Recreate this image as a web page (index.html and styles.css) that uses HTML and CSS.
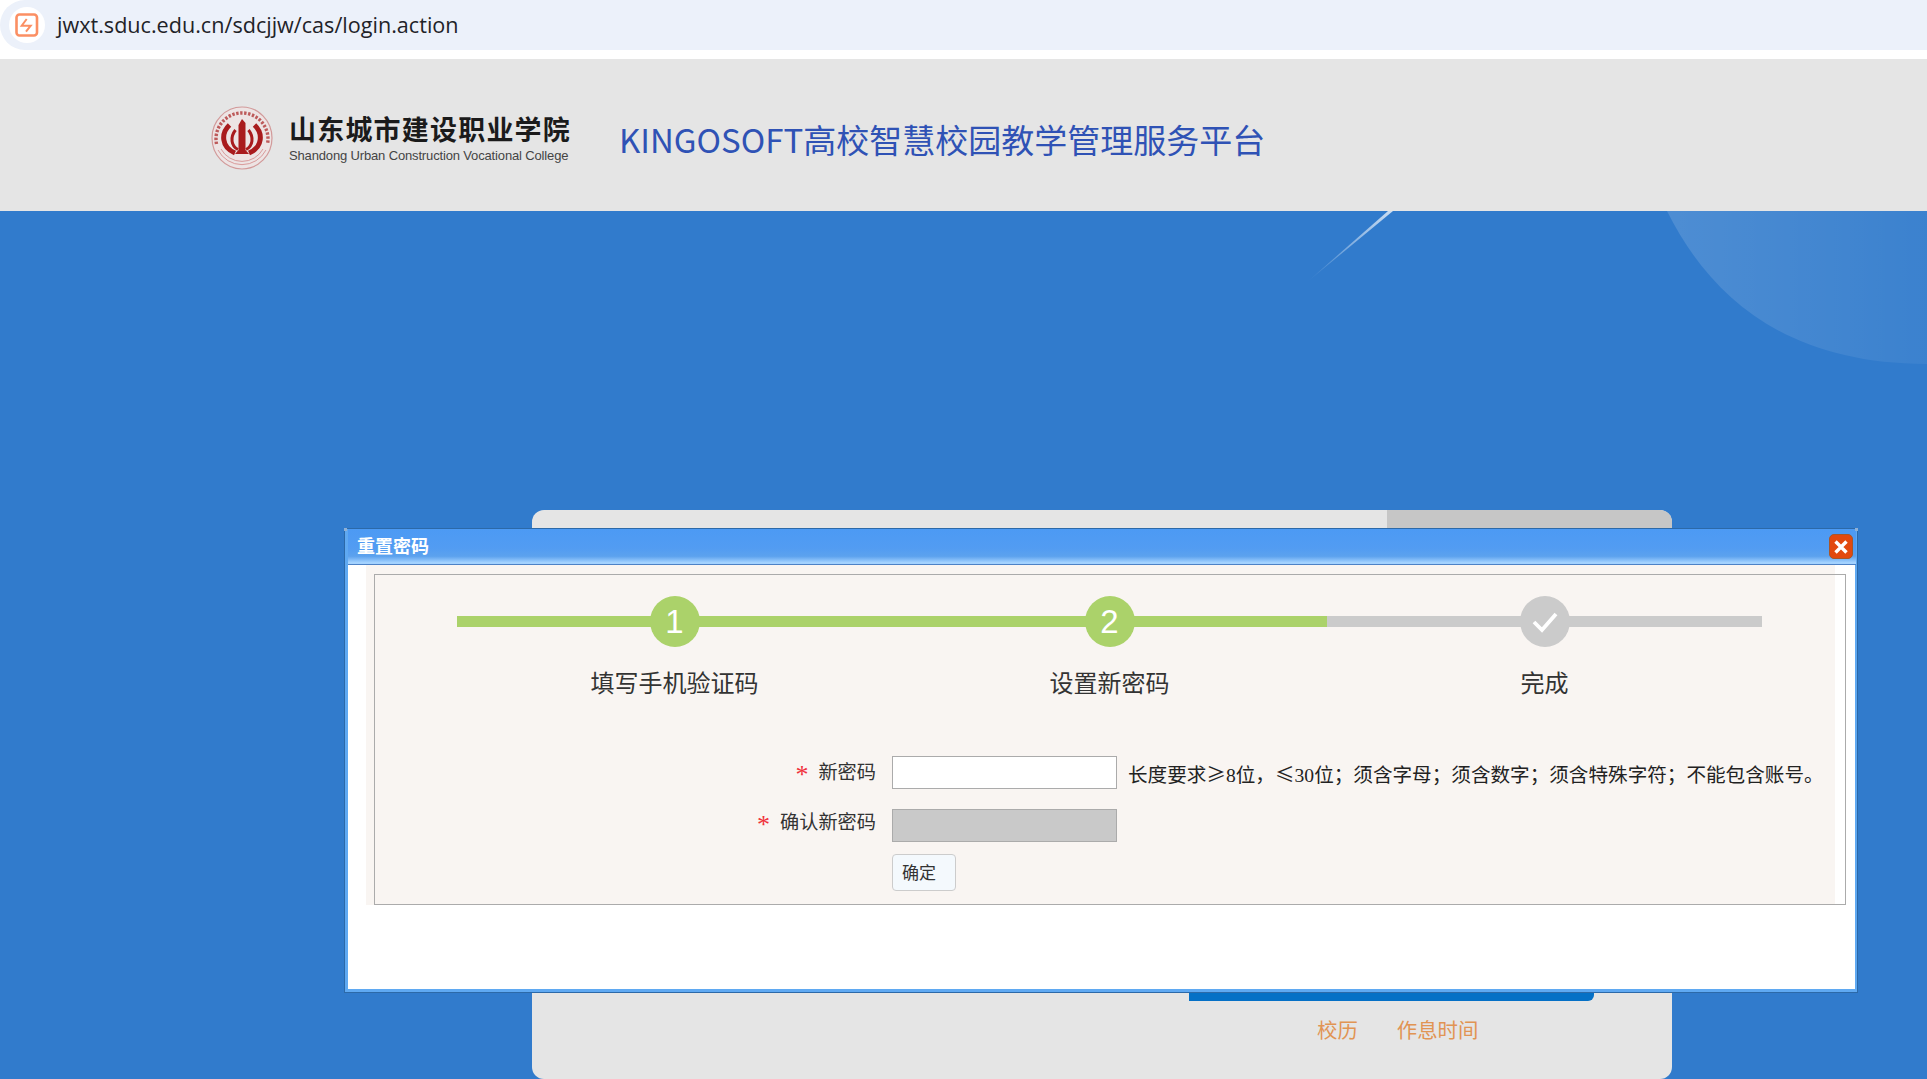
FILE: index.html
```html
<!DOCTYPE html>
<html lang="zh-CN">
<head>
<meta charset="utf-8">
<title>重置密码</title>
<link rel="stylesheet" href="styles.css">
</head>
<body>
<div class="page">
  <div class="urlstrip">
    <div class="urlbar">
      <span class="siteicon">
        <svg width="24" height="24" viewBox="0 0 24 24"><rect x="1.5" y="1.5" width="20.5" height="21" rx="3" fill="#fff" stroke="#FB8F63" stroke-width="2.6"/><path d="M11.7 6 6.7 12.7h9L11 18.7" fill="none" stroke="#FB8F63" stroke-width="2"/></svg>
      </span>
      <span class="urltext">jwxt.sduc.edu.cn/sdcjjw/cas/login.action</span>
    </div>
  </div>
  <header class="brand">
    <svg class="seal" width="62" height="64" viewBox="0 0 62 64">
      <ellipse cx="31" cy="32" rx="30" ry="31" fill="#EDE4E4" stroke="#D29A9A" stroke-width="1.2"/>
      <path d="M5.5 38A26 26 0 1 1 56.5 38" fill="none" stroke="#BD5A5A" stroke-width="3.4" stroke-dasharray="2.4 1.6"/>
      <path d="M7 44A27 27 0 0 0 55 44M10 43A24 24 0 0 0 52 43" fill="none" stroke="#D99A9A" stroke-width="1"/>
      <path d="M18.5 19C10 27 10 41 24 47M43.5 19C52 27 52 41 38 47" fill="none" stroke="#A91B1D" stroke-width="5"/>
      <path d="M24.5 24C19 31 20 40 27 43.5M37.5 24C43 31 42 40 35 43.5" fill="none" stroke="#A91B1D" stroke-width="3"/>
      <path d="M27.5 44V19L31 13l3.5 4V44l3.5 4H24Z" fill="#A91B1D"/>
    </svg>
    <div class="collegename">
      <div class="zh">山东城市建设职业学院</div>
      <div class="en">Shandong Urban Construction Vocational College</div>
    </div>
    <h1 class="platform">KINGOSOFT高校智慧校园教学管理服务平台</h1>
  </header>
  <main class="stage">
    <svg class="decor" width="1927" height="160" viewBox="0 0 1927 160">
      <defs>
        <linearGradient id="arc" x1="0" x2="1" y1="0" y2="0"><stop offset="0" stop-color="#fff" stop-opacity=".14"/><stop offset="1" stop-color="#fff" stop-opacity=".05"/></linearGradient>
        <linearGradient id="streak" x1="1" x2="0" y1="0" y2="1"><stop offset="0" stop-color="#fff" stop-opacity=".75"/><stop offset="1" stop-color="#fff" stop-opacity="0"/></linearGradient>
      </defs>
      <path d="M1667 0C1712 90 1790 153 1927 153V0Z" fill="url(#arc)"/>
      <path d="M1388 0h5L1306 72Z" fill="url(#streak)"/>
    </svg>
    <section class="card">
      <div class="cardhead"><div class="tabgap"></div><div class="tabside"></div></div>
      <div class="cardbody">
        <div class="loginbar"></div>
        <nav class="links"><a>校历</a><a>作息时间</a></nav>
      </div>
    </section>
    <section class="dialog">
      <div class="titlebar">
        <span class="dialogtitle">重置密码</span>
        <span class="close"><svg width="16" height="16" viewBox="0 0 16 16"><path d="M2.5 2.5l11 11M13.5 2.5l-11 11" stroke="#fff" stroke-width="3.4"/></svg></span>
      </div>
      <div class="dialogbody">
        <div class="panel">
          <div class="framed">
            <div class="steps">
              <div class="step done">
                <div class="track"><span class="dot">1</span></div>
                <div class="steplabel">填写手机验证码</div>
              </div>
              <div class="step done">
                <div class="track"><span class="dot">2</span></div>
                <div class="steplabel">设置新密码</div>
              </div>
              <div class="step">
                <div class="track"><span class="dot"><svg width="30" height="24" viewBox="0 0 30 24"><path d="M4 12l8 8L26 4" fill="none" stroke="#fff" stroke-width="3.8"/></svg></span></div>
                <div class="steplabel">完成</div>
              </div>
            </div>
            <form class="form">
              <div class="row">
                <label class="label"><span class="star">*</span>新密码</label>
                <input class="field" type="password">
                <span class="hint">长度要求≥<span class="num">8</span>位，≤<span class="num">30</span>位；须含字母；须含数字；须含特殊字符；不能包含账号。</span>
              </div>
              <div class="row">
                <label class="label tight"><span class="star">*</span>确认新密码</label>
                <input class="field off" type="password" disabled>
              </div>
              <div class="row btnrow">
                <button class="ok" type="button">确定</button>
              </div>
            </form>
          </div>
        </div>
      </div>
    </section>
  </main>
</div>
</body>
</html>
```

FILE: styles.css
```css
* { box-sizing: border-box; }
html, body { margin: 0; padding: 0; }
body { background: #fff; font-family: "Noto Sans CJK SC", sans-serif; }
.page { width: 1927px; height: 1079px; overflow: hidden; display: flex; flex-direction: column; }

.urlstrip { height: 59px; padding-bottom: 9px; background: #fff; }
.urlbar { height: 50px; background: #ECF1FA; border-radius: 25px 0 0 25px; display: flex; align-items: center; padding-left: 9px; }
.siteicon { width: 36px; height: 36px; border-radius: 50%; background: #fff; display: flex; align-items: center; justify-content: center; }
.urltext { margin-left: 12px; margin-top: -2px; font-family: "Open Sans", sans-serif; font-size: 21.6px; color: #1F2328; }

.brand { height: 152px; background: #E5E5E5; display: flex; align-items: center; padding-left: 211px; }
.seal { flex: none; margin-top: 6px; filter: blur(.4px); }
.collegename { margin-left: 16px; width: 300px; margin-top: 6px; }
.zh { font-size: 27px; line-height: 36px; font-weight: 700; letter-spacing: 1.2px; color: #1b1b1b; white-space: nowrap; }
.en { font-family: "Liberation Sans", sans-serif; font-size: 13px; line-height: 18px; color: #444; white-space: nowrap; letter-spacing: -.15px; }
.platform { margin: 8px 0 0 30px; font-size: 33px; line-height: 40px; font-weight: 400; color: #2F52B5; white-space: nowrap; }

.stage { position: relative; flex: 1; background: #317BCC; padding: 299px 0 0 532px; }
.decor { position: absolute; left: 0; top: 0; }
.card { position: relative; width: 1140px; height: 569px; background: #E5E5E5; border-radius: 12px; overflow: hidden; }
.cardhead { display: flex; height: 40px; }
.tabgap { flex: 1; }
.tabside { width: 285px; background: #C6C6C6; }
.cardbody { padding: 400px 78px 0 657px; }
.loginbar { height: 51px; background: #0570C6; border-radius: 0 0 6px 0; }
.links { display: flex; gap: 39px; margin-top: 18px; padding-left: 128px; font-size: 20.4px; line-height: 20px; color: #E19453; }

.dialog { position: absolute; left: 344px; top: 317px; width: 1514px; height: 465px; background: #5FA9F2; border: 1px solid #2C69A8; padding: 0 2px 2px 3px; display: flex; flex-direction: column; }
.dialog::before, .dialog::after { content: ""; position: absolute; top: -1px; width: 3px; height: 3px; background: #8FB0D5; }
.dialog::before { left: -1px; }
.dialog::after { right: -1px; }
.titlebar { height: 36px; margin: 0 -1px 0 0; flex: none; display: flex; align-items: center; justify-content: space-between; padding: 0 3px 0 9px; background: linear-gradient(#4C9AF4 0, #529CF2 55%, #5CA2EE 78%, #A3D2FF 96%); border-bottom: 1px solid #4D82C6; }
.dialogtitle { color: #fff; font-size: 18px; line-height: 20px; font-weight: 700; margin-top: -3px; }
.close { width: 24px; height: 25px; background: #E2490F; border: 1px solid #A7562A; border-radius: 5px; display: flex; align-items: center; justify-content: center; }
.close svg { display: block; }

.dialogbody { flex: 1; background: #fff; padding-left: 18px; border-bottom: 1px solid #5FA9F2; }
.panel { width: 1469px; height: 340px; background: #F9F5F2; padding: 9px 0 0 8px; }
.framed { width: 1472px; height: 331px; border: 1px solid #ABABAB; padding-top: 21px; }

.steps { display: flex; margin-left: 82px; width: 1305px; }
.step { flex: 1; text-align: center; }
.track { height: 11px; background: #CBCBCB; margin: 20px 0 38px; position: relative; display: flex; justify-content: center; align-items: center; }
.step.done .track { background: #ABD26A; }
.dot { width: 50px; height: 51px; flex: none; border-radius: 50%; background: #CBCBCB; color: #fff; font-family: "Liberation Sans", sans-serif; font-size: 33px; line-height: 51px; display: flex; align-items: center; justify-content: center; }
.step.done .dot { background: #ABD26A; }
.steplabel { font-size: 24px; line-height: 34px; color: #333; }

.form { margin-top: 57px; display: flex; flex-direction: column; gap: 20px; }
.row { display: flex; align-items: flex-start; font-size: 19.2px; line-height: 24px; color: #333; }
.label { width: 501px; text-align: right; white-space: nowrap; margin-top: 3px; }
.label.tight { margin-top: 0; }
.star { color: #F0303A; margin-right: 10px; font-family: "Liberation Serif", serif; font-size: 26px; vertical-align: -4px; line-height: 20px; }
.field { margin: 0 0 0 16px; width: 225px; height: 33px; border: 1px solid #ABABAB; background: #fff; padding: 0; }
.field.off { background: #C9C9C9; }
.hint { margin: 6px 0 0 11px; font-size: 19.6px; color: #222; white-space: nowrap; }
.num { font-family: "Liberation Serif", serif; }
.btnrow { padding-left: 517px; margin-top: -8px; }
.ok { width: 64px; height: 37px; padding: 0 0 2px 9px; text-align: left; background: #F4F9FD; border: 1px solid #CCCCCC; border-radius: 4px; font-family: inherit; font-size: 17px; color: #333; }
```
